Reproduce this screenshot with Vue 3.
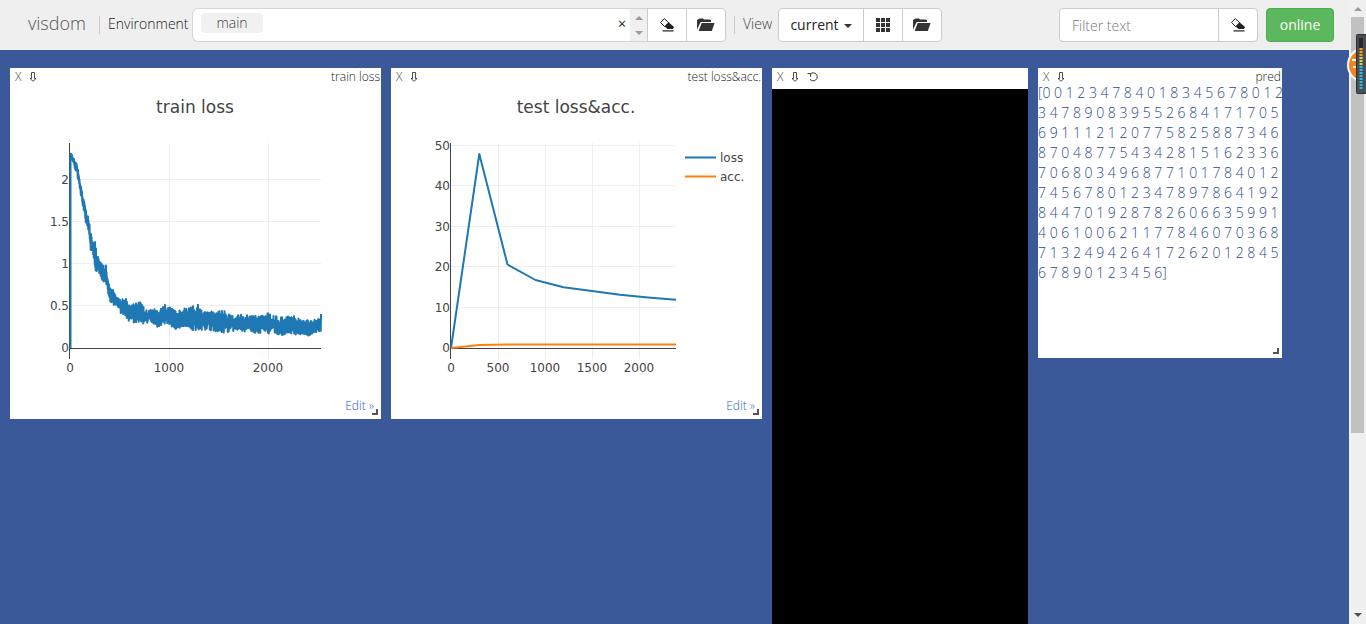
<script setup>
import { ref } from 'vue'

const filter = ref('')

// train loss envelope: x, upper y, lower y inside the pane
const envelope = [
  [61, 86, 90], [62, 87, 92], [67, 97, 106], [70, 112, 124], [73, 130, 138], [76, 141, 155],
  [79, 152, 165], [80, 162, 181], [83, 174, 184], [85, 175, 202], [88, 189, 203], [92, 197, 211],
  [94, 198, 214], [96, 198, 216], [98, 212, 226], [100, 220, 233], [103, 222, 236], [107, 230, 239],
  [111, 232, 245], [115, 229, 246], [118, 236, 253], [124, 237, 254], [130, 233, 254],
  [134, 240, 255], [142, 241, 256], [150, 242, 260], [154, 237, 255], [158, 238, 255],
  [165, 242, 261], [173, 241, 258], [180, 240, 261], [183, 238, 262], [191, 242, 262],
  [198, 244, 262], [206, 244, 263], [217, 243, 264], [222, 247, 263], [230, 247, 263],
  [240, 248, 263], [250, 249, 265], [258, 246, 265], [268, 249, 266], [274, 250, 267],
  [283, 247, 266], [292, 253, 267], [300, 252, 267], [306, 252, 264], [311, 250, 263]
]

function trainPath() {
  let seed = 17
  const rand = () => {
    seed = (seed * 16807) % 2147483647
    return seed / 2147483647
  }
  let d = 'M60.5 280V86'
  let k = 0
  let high = false
  for (let i = 0; i <= 1000; i++) {
    const x = 61 + i * 0.25
    while (k < envelope.length - 2 && envelope[k + 1][0] < x) k++
    const a = envelope[k]
    const b = envelope[k + 1]
    const t = (x - a[0]) / (b[0] - a[0])
    const top = a[1] + (b[1] - a[1]) * t
    const low = a[2] + (b[2] - a[2]) * t
    const reach = (low - top) * (rand() * 0.46 - 0.04)
    high = !high
    d += `L${x.toFixed(2)} ${(high ? top + reach : low - reach).toFixed(1)}`
  }
  return d + 'V246M188 250V236'
}

const charts = [
  {
    name: 'train loss',
    right: 311,
    xs: [[60, '0'], [159, '1000'], [258, '2000']],
    ys: [[280, '0'], [238, '0.5'], [196, '1'], [154, '1.5'], [112, '2']],
    lines: [{ color: '#1f77b4', d: trainPath() }],
    legend: []
  },
  {
    name: 'test loss&acc.',
    right: 285,
    xs: [[60, '0'], [107, '500'], [154, '1000'], [201, '1500'], [248, '2000']],
    ys: [[280, '0'], [240, '10'], [199, '20'], [159, '30'], [118, '40'], [78, '50']],
    lines: [
      { color: '#1f77b4', d: 'M60 280L88.3 86L116.5 196.5L144.5 212L172.5 219.2L201 223L229 226.8L257 229.5L285 231.8' },
      { color: '#ff7f0e', d: 'M60 280L88.3 277L116.5 276.5H285' }
    ],
    legend: [['loss', '#1f77b4', 89], ['acc.', '#ff7f0e', 108]]
  }
]

const rows = [
  '[0 0 1 2 3 4 7 8 4 0 1 8 3 4 5 6 7 8 0 1 2',
  '3 4 7 8 9 0 8 3 9 5 5 2 6 8 4 1 7 1 7 0 5',
  '6 9 1 1 1 2 1 2 0 7 7 5 8 2 5 8 8 7 3 4 6',
  '8 7 0 4 8 7 7 5 4 3 4 2 8 1 5 1 6 2 3 3 6',
  '7 0 6 8 0 3 4 9 6 8 7 7 1 0 1 7 8 4 0 1 2',
  '7 4 5 6 7 8 0 1 2 3 4 7 8 9 7 8 6 4 1 9 2',
  '8 4 4 7 0 1 9 2 8 7 8 2 6 0 6 6 3 5 9 9 1',
  '4 0 6 1 0 0 6 2 1 1 7 7 8 4 6 0 7 0 3 6 8',
  '7 1 3 2 4 9 4 2 6 4 1 7 2 6 2 0 1 2 8 4 5',
  '6 7 8 9 0 1 2 3 4 5 6]'
].join('\n')
</script>

<template>
  <svg class="defs" aria-hidden="true">
    <symbol id="eraser" viewBox="0 0 16 16">
      <path d="M1.500 5.500 5.300 1.600l4.500 4.200-4 4z" fill="#fff" stroke="#222" />
      <path d="M9.500 5.300 14.800 9.800V11L13.500 12H8.500L5.500 9.500z" fill="#222" />
      <path d="M3.500 13.300h11v1.200h-11z" fill="#222" />
    </symbol>
    <symbol id="folder" viewBox="0 0 18 14">
      <path d="M0 11.5V2.2L1 1.2h.6L2.2.4h4l.7 1.2H13l1 1V4H4.2L3.4 4.6z" fill="#333" />
      <path d="M4.7 5H17.6l-2.8 8H1.6z" fill="#333" />
    </symbol>
    <symbol id="th" viewBox="0 0 14 14">
      <path d="M0 0h4v4H0zM5 0h4v4H5zM10 0h4v4h-4zM0 5h4v4H0zM5 5h4v4H5zM10 5h4v4h-4zM0 10h4v4H0zM5 10h4v4H5zM10 10h4v4h-4z" fill="#333" />
    </symbol>
    <symbol id="save" viewBox="0 0 8 10">
      <path d="M2.500.5h3v6h1.500L4 9.300 1 6.500h1.500z" fill="#fff" stroke="#222" stroke-width="0.8" />
    </symbol>
    <symbol id="reset" viewBox="0 0 12 10">
      <path d="M3.300 2.100A4 4 0 1 1 3 7.200M.5 1.600h3.200V4.800" fill="none" stroke="#333" />
    </symbol>
  </svg>

  <div class="page">
    <div class="view">
      <header class="bar">
        <h1 class="brand">visdom</h1>
        <span class="divider"></span>
        <label class="label env-label" for="env">Environment</label>
        <div class="env">
          <span class="tag">main</span>
          <input id="env" class="env-input" type="text" />
          <button class="clear" aria-label="Clear environments">×</button>
          <span class="spin"><i class="tri up"></i><i class="tri down"></i></span>
        </div>
        <button class="btn icon" aria-label="Clear environment"><svg class="i16"><use href="#eraser" /></svg></button>
        <button class="btn icon end" aria-label="Manage environments"><svg class="i18"><use href="#folder" /></svg></button>
        <span class="divider second"></span>
        <span class="label view-label">View</span>
        <button class="btn current">current<i class="caret"></i></button>
        <button class="btn icon" aria-label="Repack"><svg class="i14"><use href="#th" /></svg></button>
        <button class="btn icon end" aria-label="Manage views"><svg class="i18"><use href="#folder" /></svg></button>
        <span class="spacer"></span>
        <input v-model="filter" class="filter" type="text" placeholder="Filter text" aria-label="Filter text" />
        <button class="btn icon end" aria-label="Clear filter"><svg class="i16"><use href="#eraser" /></svg></button>
        <button class="btn online">online</button>
      </header>

      <main class="panes">
        <section v-for="c in charts" :key="c.name" class="pane">
          <div class="pane-bar">
            <button class="tool" aria-label="Close">X</button>
            <button class="tool" aria-label="Save"><svg class="save"><use href="#save" /></svg></button>
            <span class="pane-title">{{ c.name }}</span>
          </div>
          <svg class="chart" viewBox="0 15 371 336">
            <text class="title" x="185" y="45">{{ c.name }}</text>
            <path v-for="[y] in c.ys.slice(1)" :key="'h' + y" class="grid" :d="`M60 ${y - 0.5}H${c.right}`" />
            <path v-for="[x] in c.xs.slice(1)" :key="'v' + x" class="grid" :d="`M${x + 0.5} 75V291`" />
            <path class="axis" :d="`M59.5 75V291M59 280.5H${c.right}`" />
            <path v-for="l in c.lines" :key="l.color" class="series" :d="l.d" :stroke="l.color" />
            <text v-for="[y, t] in c.ys" :key="'y' + t" class="tick ytick" x="59" :y="y + 4">{{ t }}</text>
            <text v-for="[x, t] in c.xs" :key="'x' + t" class="tick xtick" :x="x" y="304">{{ t }}</text>
            <g v-for="[t, color, y] in c.legend" :key="t">
              <path class="series" :d="`M294 ${y + 0.5}h31`" :stroke="color" />
              <text class="tick" x="329" :y="y + 5">{{ t }}</text>
            </g>
          </svg>
          <a class="edit" href="#">Edit »</a>
          <i class="grip"></i>
        </section>

        <section class="pane image-pane">
          <div class="pane-bar tall">
            <button class="tool" aria-label="Close">X</button>
            <button class="tool" aria-label="Save"><svg class="save"><use href="#save" /></svg></button>
            <button class="tool" aria-label="Reset"><svg class="reset"><use href="#reset" /></svg></button>
          </div>
          <div class="image"></div>
        </section>

        <section class="pane text-pane">
          <div class="pane-bar">
            <button class="tool" aria-label="Close">X</button>
            <button class="tool" aria-label="Save"><svg class="save"><use href="#save" /></svg></button>
            <span class="pane-title">pred</span>
          </div>
          <p class="digits">{{ rows }}</p>
          <i class="grip"></i>
        </section>
      </main>
    </div>

    <div class="scroll">
      <i class="tri up"></i>
      <div class="track"><div class="thumb"></div><div class="rest"></div></div>
      <i class="tri down dark"></i>
    </div>

    <svg class="widget" viewBox="0 0 20 62" aria-hidden="true">
      <circle cx="19" cy="32" r="18" fill="#fff" />
      <circle cx="19" cy="32" r="16" fill="#f6821f" />
      <path d="M6 27h4M7 34h3" stroke="#fff" stroke-width="2" />
      <rect x="10.500" y="1.500" width="14" height="59" rx="1" fill="#4a4d52" stroke="#2c2e31" />
      <path d="M13 5h4v10h-4z" fill="#26282b" />
      <path d="M15 15v10" stroke="#ff9c10" stroke-width="3" stroke-dasharray="2 1" />
      <path d="M15 24v9" stroke="#d4d840" stroke-width="3" stroke-dasharray="2 1" />
      <path d="M15 33v24" stroke="#22c0f0" stroke-width="3" stroke-dasharray="2 1" />
    </svg>
  </div>
</template>

<style>
body {
  margin: 0;
  background: #3b5998;
}
</style>

<style scoped>
* {
  box-sizing: border-box;
}
.defs {
  position: absolute;
  width: 0;
  height: 0;
}
.page {
  position: relative;
  display: flex;
  height: 100vh;
  overflow: hidden;
  font: 300 14px/20px "Open Sans", "Noto Sans", sans-serif;
  color: #222;
}
.view {
  flex: 1;
  min-width: 0;
  display: flex;
  flex-direction: column;
}
button,
input {
  font: inherit;
  color: inherit;
  margin: 0;
  padding: 0;
  border: 0;
  background: none;
  outline: none;
}
.bar {
  display: flex;
  align-items: center;
  padding: 8px 15px 8px 28px;
  background: #efefef;
}
.brand {
  margin: 0;
  width: 71px;
  font-size: 18px;
  font-weight: 300;
  line-height: 28px;
  padding-bottom: 4px;
  color: #555;
}
.divider {
  width: 1px;
  height: 18px;
  background: #ccc;
}
.label {
  white-space: nowrap;
  padding-bottom: 2px;
}
.env-label {
  width: 92px;
  padding-left: 8px;
}
.env {
  flex: 0 1 455px;
  display: flex;
  align-items: center;
  height: 34px;
  padding-left: 8px;
  border: 1px solid #d4d4d4;
  border-right: 0;
  border-radius: 6px 0 0 6px;
  background: #fff;
  overflow: hidden;
}
.tag {
  width: 62px;
  margin-bottom: 4px;
  border-radius: 4px;
  background: #f1f1f1;
  color: #444;
  text-align: center;
}
.env-input {
  flex: 1;
  min-width: 0;
}
.clear {
  width: 16px;
  margin-bottom: 2px;
  font-weight: 400;
}
.spin {
  display: flex;
  flex-direction: column;
  align-items: center;
  justify-content: space-between;
  width: 17px;
  height: 32px;
  padding: 7px 0 6px;
  background: #f0f0f0;
}
.tri {
  width: 0;
  height: 0;
  border: 4px solid transparent;
}
.up {
  border-top: 0;
  border-bottom-color: #9a9a9a;
}
.down {
  border-bottom: 0;
  border-top-color: #9a9a9a;
}
.dark {
  border-top-color: #505050;
}
.btn {
  display: flex;
  align-items: center;
  justify-content: center;
  height: 34px;
  border: 1px solid #ccc;
  background: #fff;
  font-weight: 400;
}
.icon {
  width: 40px;
}
.btn + .icon {
  margin-left: -1px;
}
.filter + .icon {
  margin-left: -1px;
}
.end {
  border-radius: 0 4px 4px 0;
}
.i14 {
  width: 14px;
  height: 14px;
}
.i16 {
  width: 16px;
  height: 16px;
}
.i18 {
  width: 18px;
  height: 14px;
}
.second {
  margin-left: 8px;
}
.view-label {
  width: 43px;
  padding-left: 8px;
  color: #444;
}
.current {
  width: 86px;
  border-radius: 4px 0 0 4px;
}
.caret {
  margin: 2px 0 0 5px;
  border: 4px solid transparent;
  border-top-color: #333;
  border-bottom: 0;
}
.spacer {
  flex: 1;
}
.filter {
  width: 160px;
  height: 34px;
  padding: 0 12px;
  border: 1px solid #ccc;
  border-radius: 4px 0 0 4px;
  background: #fff;
}
.filter::placeholder {
  color: #777;
  opacity: 1;
}
.online {
  width: 68px;
  margin-left: 8px;
  border-color: #4cae4c;
  border-radius: 4px;
  background: #5cb85c;
  color: #fff;
}
.panes {
  flex: 1;
  min-height: 0;
  display: grid;
  grid-template-columns: 371fr 371fr 256fr 244fr;
  align-items: start;
  gap: 10px;
  padding: 18px 67px 0 10px;
}
.pane {
  position: relative;
  min-width: 0;
  background: #fff;
  font-size: 12px;
}
.pane-bar {
  display: flex;
  gap: 8px;
  height: 15px;
  padding: 1px 1px 0 5px;
  line-height: 15px;
}
.tall {
  height: 21px;
  flex: none;
}
.tool {
  height: 15px;
  line-height: 15px;
  color: #444;
}
.save {
  display: block;
  width: 8px;
  height: 10px;
}
.reset {
  display: block;
  width: 12px;
  height: 10px;
}
.pane-title {
  margin-left: auto;
  line-height: 16px;
}
.chart {
  display: block;
  width: 100%;
  font-family: "DejaVu Sans", Verdana, sans-serif;
  font-weight: 400;
  fill: #444;
}
.title {
  font-size: 17px;
  text-anchor: middle;
}
.tick {
  font-size: 12px;
}
.ytick {
  text-anchor: end;
}
.xtick {
  text-anchor: middle;
}
.grid {
  stroke: #eee;
}
.axis {
  stroke: #444;
}
.series {
  fill: none;
  stroke-width: 2;
  stroke-linejoin: round;
}
.edit {
  position: absolute;
  right: 7px;
  bottom: 3px;
  color: #2a62cc;
  text-decoration: none;
}
.grip {
  position: absolute;
  right: 3px;
  bottom: 4px;
  width: 6px;
  height: 6px;
  border: solid #555;
  border-width: 0 2px 2px 0;
}
.image-pane {
  display: flex;
  flex-direction: column;
  align-self: stretch;
}
.image {
  flex: 1;
  background: #000;
}
.digits {
  min-height: 275px;
  margin: 0;
  white-space: pre;
  font-size: 14px;
  color: #2b4a8c;
}
.scroll {
  display: flex;
  flex-direction: column;
  align-items: center;
  width: 17px;
  padding: 7px 0;
  background: #f0f0f0;
}
.track {
  flex: 1;
  display: flex;
  flex-direction: column;
  width: 13px;
  margin: 6px 0;
}
.thumb {
  flex: 12;
  background: #c1c1c1;
}
.rest {
  flex: 5;
}
.widget {
  position: absolute;
  top: 33px;
  right: 0;
  width: 20px;
  height: 62px;
}
</style>
